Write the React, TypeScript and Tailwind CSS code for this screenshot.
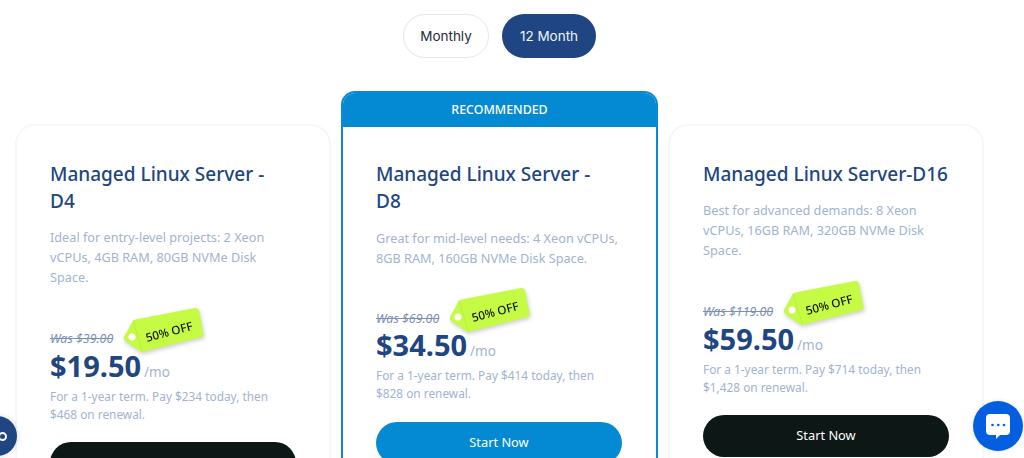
import React from "react";

function Tag() {
  return (
    <div className="absolute left-full ml-[10px] top-[-22px] w-[82px] h-[48px] drop-shadow-[1px_2px_2px_rgba(0,0,0,0.2)]">
      <svg viewBox="0 0 82 48" className="absolute inset-0 w-full h-full">
        <path
          d="M1 30 L9.5 14.5 Q10.5 13 12.5 12.5 L72 1 Q75 0.5 76 3.5 L80.5 27 Q81 29.5 78.5 30 L21 44.5 Q19 45 17.5 44.5 L2 34 Q0.3 32.5 1 30 Z"
          fill="#c5fb45"
        />
        <path d="M10 13.5 L19.5 44.5" stroke="#b6ec3a" strokeWidth="0.8" fill="none" />
        <circle cx="9" cy="30" r="3.5" fill="#ffffff" />
      </svg>
      <span className="absolute left-[22px] top-[16px] text-[11.7px] leading-[16px] font-medium text-[#111] whitespace-nowrap -rotate-[15deg]">
        50% OFF
      </span>
    </div>
  );
}

type CardProps = {
  title: React.ReactNode;
  desc: React.ReactNode;
  was: string;
  price: string;
  term: React.ReactNode;
  recommended?: boolean;
};

function Card({ title, desc, was, price, term, recommended }: CardProps) {
  return (
    <div
      className={
        recommended
          ? "w-[317px] rounded-[14px] border-2 border-[#0a8ad2] bg-white overflow-hidden"
          : "w-[316px] mt-[33px] rounded-[20px] border-2 border-[#f5f7fc] bg-white"
      }
    >
      {recommended && (
        <div className="h-[36px] -mt-[2px] pt-[2px] bg-[#038ad3] text-white text-[12.4px] font-medium flex items-center justify-center">
          RECOMMENDED
        </div>
      )}
      <div className={"pl-[33px] pr-[30px] pb-[20px] " + (recommended ? "pt-[34px]" : "pt-[35px]")}>
        <h3 className="text-[19px] leading-[27px] font-medium text-[#20467f] whitespace-nowrap">{title}</h3>
        <p className={"text-[12.7px] leading-[20px] text-[#a3b3cf] whitespace-nowrap " + (recommended ? "mt-[13px]" : "mt-[12px]")}>{desc}</p>
        <div className={"relative w-fit " + (recommended ? "mt-[41px]" : "mt-[42px]")}>
          <div className="text-[12.4px] leading-[20px] italic line-through text-[#7d90b4]">{was}</div>
          <Tag />
        </div>
        <div className={"flex items-baseline " + (recommended ? "mt-[-3px]" : "mt-[-2px]")}>
          <span className="text-[29px] leading-[38px] font-bold text-[#1f4680]">{price}</span>
          <span className="ml-[3px] text-[13.5px] text-[#a3b3cf]">/mo</span>
        </div>
        <p className="mt-[2px] text-[11.85px] leading-[18px] text-[#a3b3cf] whitespace-nowrap">{term}</p>
        <button
          className={
            "w-[246px] h-[42px] rounded-full text-[12.8px] text-white " +
            (recommended ? "mt-[20px] bg-[#038ad3]" : "mt-[19px] bg-[#0c1716]")
          }
        >
          Start Now
        </button>
      </div>
    </div>
  );
}

export default function App() {
  return (
    <div className="relative w-[1024px] h-[458px] overflow-hidden bg-white font-['Noto_Sans',sans-serif]">
      <div className="w-[999px] flex justify-center gap-[13px] pt-[14px] font-['Inter',sans-serif] text-[13.5px]">
        <button className="w-[86px] h-[44px] rounded-full border border-[#e6e7eb] text-[#262b3a] bg-white">Monthly</button>
        <button className="w-[94px] h-[44px] rounded-full bg-[#1f4682] text-[#f0f4fa]">12 Month</button>
      </div>
      <div className="flex gap-[10px] pl-[15px] mt-[33px] items-start">
        <Card
          title={<>Managed Linux Server -<br />D4</>}
          desc={<>Ideal for entry-level projects: 2 Xeon<br />vCPUs, 4GB RAM, 80GB NVMe Disk<br />Space.</>}
          was="Was $39.00"
          price="$19.50"
          term={<>For a 1-year term. Pay $234 today, then<br />$468 on renewal.</>}
        />
        <Card
          recommended
          title={<>Managed Linux Server -<br />D8</>}
          desc={<>Great for mid-level needs: 4 Xeon vCPUs,<br />8GB RAM, 160GB NVMe Disk Space.</>}
          was="Was $69.00"
          price="$34.50"
          term={<>For a 1-year term. Pay $414 today, then<br />$828 on renewal.</>}
        />
        <Card
          title="Managed Linux Server-D16"
          desc={<>Best for advanced demands: 8 Xeon<br />vCPUs, 16GB RAM, 320GB NVMe Disk<br />Space.</>}
          was="Was $119.00"
          price="$59.50"
          term={<>For a 1-year term. Pay $714 today, then<br />$1,428 on renewal.</>}
        />
      </div>

      <div className="absolute left-[-23px] top-[416px] w-[40px] h-[40px] rounded-full bg-[#1f4682] flex items-center justify-center shadow-[0_0_6px_rgba(0,0,0,0.15)]">
        <div className="ml-[10px] w-[9px] h-[9px] rounded-full border-2 border-white" />
      </div>

      <div className="absolute left-[973px] top-[401px] w-[50px] h-[50px] rounded-full bg-[#035fe0] flex items-center justify-center shadow-[0_0_4px_rgba(0,0,0,0.12)]">
        <svg viewBox="0 0 26 26" className="w-[26px] h-[26px]">
          <path
            d="M5 1 H21 Q25 1 25 5 V18 Q25 22 21 22 H15 L11 26 V22 H5 Q1 22 1 18 V5 Q1 1 5 1 Z"
            fill="#ffffff"
          />
          <circle cx="7.5" cy="12" r="1.3" fill="#035fe0" />
          <circle cx="13.3" cy="12" r="1.3" fill="#035fe0" />
          <circle cx="19" cy="12" r="1.3" fill="#035fe0" />
        </svg>
      </div>
    </div>
  );
}
